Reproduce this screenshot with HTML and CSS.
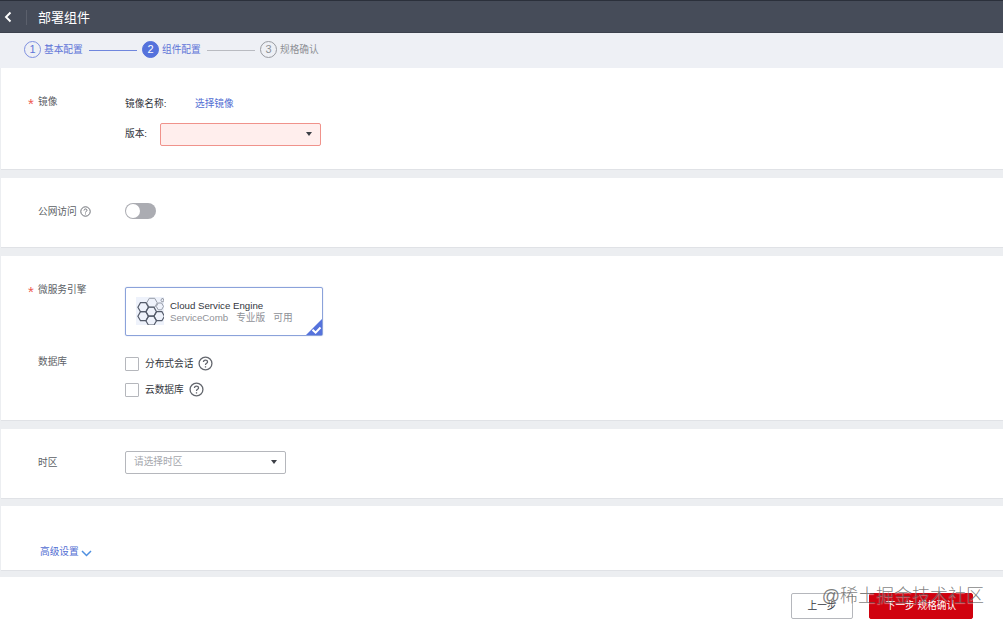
FILE: index.html
```html
<!DOCTYPE html>
<html lang="zh-CN">
<head>
    <meta charset="UTF-8">
    <title>部署组件</title>
    <link rel="stylesheet" href="styles.css">
</head>
<body>

<header class="header">
    <svg class="back" width="8" height="12" viewBox="0 0 8 12"><path d="M6.5 1.5 L2 6 L6.5 10.5"/></svg>
    <span class="header-line"></span>
    <h1>部署组件</h1>
</header>

<nav class="steps">
    <div class="step done"><span class="num">1</span>基本配置</div>
    <span class="step-line done"></span>
    <div class="step active"><span class="num">2</span>组件配置</div>
    <span class="step-line"></span>
    <div class="step"><span class="num">3</span>规格确认</div>
</nav>

<main>
    <section class="card card-image">
        <div class="label required">镜像</div>
        <div class="value">
            <div class="image-name"><span>镜像名称:</span><a class="link">选择镜像</a></div>
            <div class="image-version"><span>版本:</span><div class="select error"><i class="arrow"></i></div></div>
        </div>
    </section>

    <section class="card card-access">
        <div class="label">公网访问
            <svg class="help-small" viewBox="0 0 14 14"><circle cx="7" cy="7" r="6"/><path d="M5.1 5.7 C5.1 3.2 8.9 3.2 8.9 5.5 C8.9 6.8 7 6.9 7 8.3 M7 9.6 V10.7"/></svg>
        </div>
        <div class="switch"></div>
    </section>

    <section class="card card-engine">
        <div class="row">
            <div class="label required">微服务引擎</div>
            <div class="engine">
                <svg class="engine-icon" width="28" height="28" viewBox="0 0 28 28">
                    <defs><path id="hex" d="M-5.3 0 L-2.7 -4.5 H2.7 L5.3 0 L2.7 4.5 H-2.7 Z"/></defs>
                    <g class="hex-light">
                        <use href="#hex" x="16" y="5.8"/>
                        <path d="M20.3 9.4 L22.2 6 H25.6 L27.5 9.4 L25.6 12.8 H22.2 Z"/>
                        <path d="M24.9 3.2 L25.8 1.6 H27.2 L27.8 3.2 L27.2 4.8 H25.8 Z"/>
                    </g>
                    <g class="hex-dark">
                        <use href="#hex" x="7.2" y="10.2"/>
                        <use href="#hex" x="7.2" y="19.2"/>
                        <use href="#hex" x="15.2" y="14.7"/>
                        <use href="#hex" x="23.2" y="19.2"/>
                        <use href="#hex" x="15.2" y="23.7"/>
                    </g>
                </svg>
                <div class="engine-text">
                    <div class="engine-name">Cloud Service Engine</div>
                    <div class="engine-info"><span>ServiceComb</span><span>专业版</span><span>可用</span></div>
                </div>
                <svg class="engine-check" width="16" height="16" viewBox="0 0 16 16"><path class="corner" d="M16 0 V16 H0 Z"/><path class="tick" d="M6.5 10.8 L9.6 13.6 L14.5 8.5"/></svg>
            </div>
        </div>
        <div class="row row-db">
            <div class="label">数据库</div>
            <div class="checks">
                <div class="check"><span class="box"></span>分布式会话
                    <svg class="help" viewBox="0 0 14 14"><circle cx="7" cy="7" r="6"/><path d="M5.1 5.7 C5.1 3.2 8.9 3.2 8.9 5.5 C8.9 6.8 7 6.9 7 8.3 M7 9.6 V10.7"/></svg>
                </div>
                <div class="check"><span class="box"></span>云数据库
                    <svg class="help" viewBox="0 0 14 14"><circle cx="7" cy="7" r="6"/><path d="M5.1 5.7 C5.1 3.2 8.9 3.2 8.9 5.5 C8.9 6.8 7 6.9 7 8.3 M7 9.6 V10.7"/></svg>
                </div>
            </div>
        </div>
    </section>

    <section class="card card-zone">
        <div class="label">时区</div>
        <div class="select">请选择时区<i class="arrow"></i></div>
    </section>

    <section class="card card-advanced">
        <a class="link">高级设置<svg width="11" height="7" viewBox="0 0 11 7"><path d="M1 1 L5.5 5.5 L10 1"/></svg></a>
    </section>
</main>

<footer class="footer">
    <button class="btn">上一步</button>
    <button class="btn primary">下一步 规格确认</button>
    <div class="watermark">@稀土掘金技术社区</div>
</footer>

</body>
</html>
```

FILE: styles.css
```css
* {
    box-sizing: border-box;
}

body {
    margin: 0;
    height: 626px;
    overflow: hidden;
    background: #eceef1;
    color: #33363d;
    font: 9.7px/14px "Liberation Sans", "Noto Sans CJK SC", sans-serif;
}

.header {
    display: flex;
    align-items: center;
    height: 33px;
    padding: 2px 0 0 4px;
    background: #464c59;
    border-top: 1px solid #2b303b;
    border-bottom: 1px solid #3c414d;
    color: #fff;
}

.header h1 {
    margin: 0;
    font-size: 13px;
    font-weight: normal;
    line-height: 18px;
}

.back {
    margin-top: -2px;
    fill: none;
    stroke: #fff;
    stroke-width: 1.9;
}

.header-line {
    width: 1px;
    height: 15px;
    margin: 0 11px 0 14px;
    background: #5b606c;
}

.steps {
    display: flex;
    align-items: center;
    height: 35px;
    padding: 0 0 2px 24px;
    background: #eef0f5;
}

.step {
    display: flex;
    align-items: center;
    gap: 3px;
    width: 59px;
    color: #8e9096;
    white-space: nowrap;
}

.step .num {
    width: 17px;
    height: 17px;
    border: 1px solid #999ba1;
    border-radius: 50%;
    font-size: 11px;
    line-height: 15px;
    text-align: center;
}

.step.done,
.step.active {
    color: #5e75d8;
}

.step.done .num {
    border-color: #7f90e0;
}

.step.active .num {
    background: #5572dc;
    border-color: #5572dc;
    color: #fff;
}

.step-line {
    width: 48px;
    height: 1px;
    margin: 1px 5px 0 6px;
    background: #b9bbc1;
}

.step-line.done {
    background: #6f86dd;
}

.card {
    display: flex;
    margin: 0 0 8px 1px;
    padding-left: 37px;
    background: #fff;
    border-bottom: 1px solid #e0e2e6;
}

.card-image {
    height: 102px;
    padding-top: 27px;
}

.card-access {
    height: 70px;
    padding-top: 25px;
}

.card-engine {
    flex-direction: column;
    height: 165px;
    padding-top: 27px;
}

.card-zone {
    height: 70px;
    margin-bottom: 7px;
    padding-top: 22px;
}

.card-zone .label {
    padding-top: 5px;
}

.card-advanced {
    height: 65px;
    margin-bottom: 6px;
    padding: 39px 0 0 39px;
}

.label {
    position: relative;
    flex: none;
    width: 87px;
    color: #5c5f66;
}

.card-access .label {
    display: flex;
    align-items: center;
    gap: 3px;
    height: 17px;
}

.required::before {
    content: "*";
    position: absolute;
    left: -10px;
    top: 2px;
    color: #ee5a4f;
    font-size: 15px;
}

.link {
    color: #526ed3;
}

.image-name {
    display: flex;
    padding-top: 2px;
}

.image-name span {
    width: 70px;
}

.image-version {
    display: flex;
    align-items: center;
    margin-top: 12px;
}

.image-version span {
    width: 35px;
    margin-top: -2px;
}

.select {
    display: flex;
    align-items: center;
    justify-content: space-between;
    width: 161px;
    height: 23px;
    padding: 0 8px 2px;
    border: 1px solid #b5b7bc;
    border-radius: 2px;
    color: #a5a7ad;
}

.select.error {
    background: #ffeeed;
    border-color: #f0928b;
}

.arrow {
    margin: 1px 0 0 auto;
    border: 3.5px solid transparent;
    border-top: 4px solid #3c3f46;
    border-bottom: 0;
}

.switch {
    width: 31px;
    height: 16px;
    padding: 1px;
    background: #abacb2;
    border-radius: 9px;
}

.switch::before {
    content: "";
    display: block;
    width: 14px;
    height: 14px;
    background: #fff;
    border-radius: 50%;
}

.help,
.help-small {
    fill: none;
    stroke: #63666d;
    stroke-width: 1.2;
}

.help-small {
    width: 11px;
    height: 11px;
}

.help {
    width: 15px;
    height: 15px;
    margin: -1px 0 0 5px;
}

.row {
    display: flex;
}

.engine {
    position: relative;
    display: flex;
    width: 198px;
    height: 49px;
    margin-top: 4px;
    padding: 9px 0 0 10px;
    border: 1px solid #8ba2da;
    box-shadow: 0 0 1px #8ba2da;
    border-radius: 2px;
}

.engine-icon {
    margin-right: 6px;
    background: #eef2fb;
    fill: none;
}

.hex-light {
    stroke: #8c929e;
    stroke-width: 0.9;
}

.hex-dark {
    stroke: #555c6b;
    stroke-width: 1.2;
}

.engine-text {
    padding-top: 3px;
    line-height: 12px;
    white-space: nowrap;
}

.engine-info {
    display: flex;
    gap: 8px;
    color: #8f9197;
}

.engine-check {
    position: absolute;
    right: 0;
    bottom: 0;
}

.corner {
    fill: #5572dc;
}

.tick {
    fill: none;
    stroke: #fff;
    stroke-width: 2;
}

.row-db {
    margin-top: 19px;
}

.check {
    display: flex;
    align-items: center;
    height: 16px;
    margin: 1px 0 10px;
}

.box {
    width: 14px;
    height: 14px;
    margin-right: 6px;
    border: 1px solid #b5b7bc;
    border-radius: 1px;
}

.card-advanced svg {
    margin: 0 0 -2px 2px;
    fill: none;
    stroke: #4e8fe0;
    stroke-width: 1.5;
}

.footer {
    position: relative;
    display: flex;
    justify-content: flex-end;
    gap: 16px;
    height: 50px;
    padding: 16px 30px 0 0;
    background: #fff;
}

.btn {
    width: 62px;
    height: 26px;
    padding: 0 0 1px;
    background: #fff;
    border: 1px solid #b5b7bc;
    border-radius: 2px;
    color: #33363d;
    font: inherit;
}

.btn.primary {
    width: 104px;
    background: #d0020f;
    border-color: #d0020f;
    color: #fff;
}

.watermark {
    position: absolute;
    top: 8px;
    right: 19px;
    color: rgba(85, 85, 85, 0.75);
    font-size: 18px;
    font-weight: 300;
    line-height: 22px;
    text-shadow: 0 1px 1px rgba(255, 255, 255, 0.5);
}
```
